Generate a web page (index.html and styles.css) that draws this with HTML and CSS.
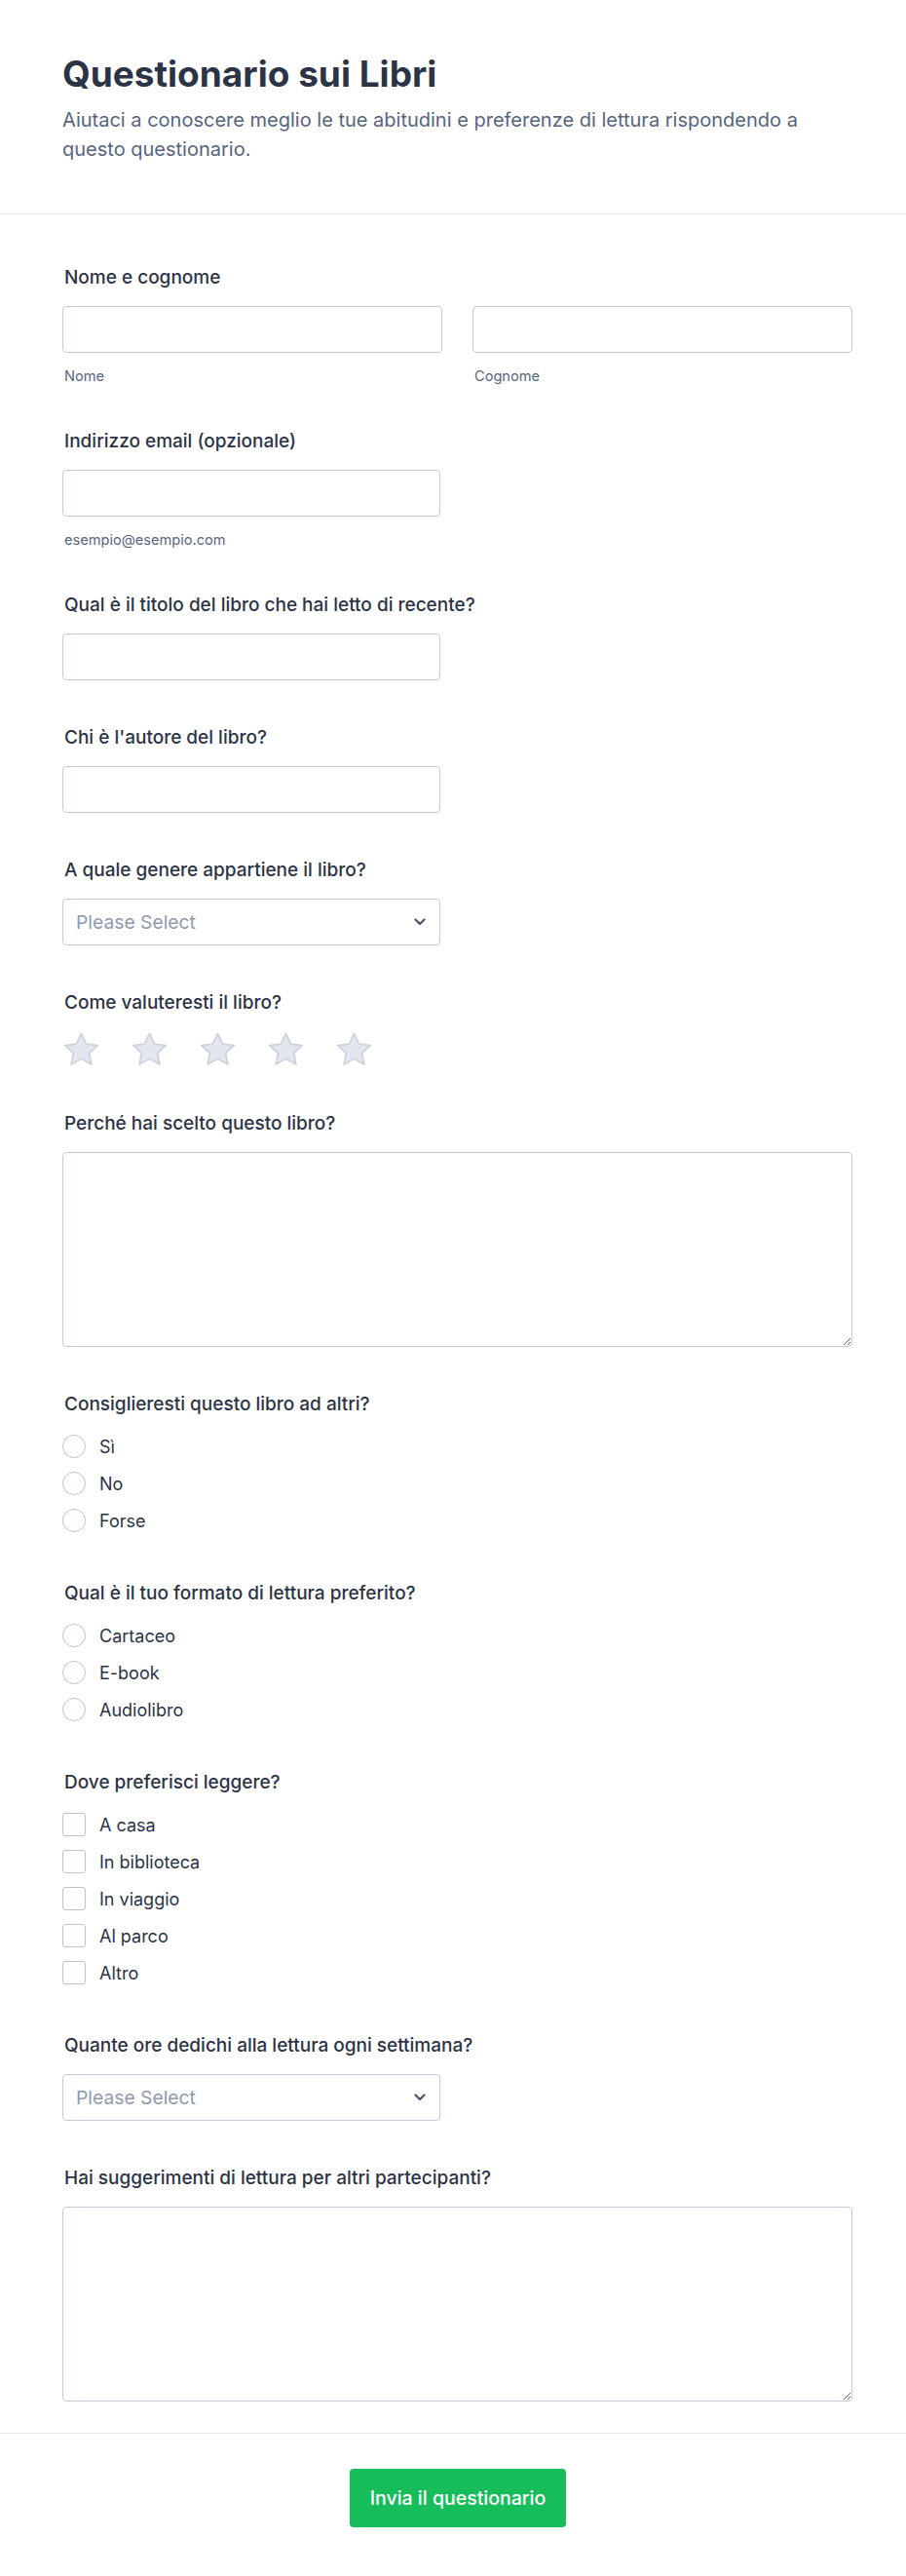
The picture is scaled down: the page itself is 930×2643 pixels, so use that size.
FILE: index.html
```html
<!DOCTYPE html>
<html lang="it">
<head>
<meta charset="utf-8">
<title>Questionario sui Libri</title>
<link rel="stylesheet" href="styles.css">
</head>
<body>
<header class="head">
  <h1 class="title">Questionario sui Libri</h1>
  <p class="subtitle">Aiutaci a conoscere meglio le tue abitudini e preferenze di lettura rispondendo a questo questionario.</p>
</header>

<main class="form">
  <div class="field has-sub">
    <label class="label">Nome e cognome</label>
    <div class="pair">
      <div class="pair-col">
        <input class="input" type="text">
        <span class="sub">Nome</span>
      </div>
      <div class="pair-col">
        <input class="input" type="text">
        <span class="sub">Cognome</span>
      </div>
    </div>
  </div>

  <div class="field has-sub">
    <label class="label">Indirizzo email (opzionale)</label>
    <input class="input half" type="email">
    <span class="sub">esempio@esempio.com</span>
  </div>

  <div class="field">
    <label class="label">Qual è il titolo del libro che hai letto di recente?</label>
    <input class="input half" type="text">
  </div>

  <div class="field">
    <label class="label">Chi è l'autore del libro?</label>
    <input class="input half" type="text">
  </div>

  <div class="field">
    <label class="label">A quale genere appartiene il libro?</label>
    <div class="select half">
      <span class="placeholder">Please Select</span>
      <svg class="chev" width="12" height="8" viewBox="0 0 12 8"><polyline points="1.5,1.5 6,6 10.5,1.5" fill="none" stroke="#4b5671" stroke-width="2.2" stroke-linecap="round" stroke-linejoin="round"/></svg>
    </div>
  </div>

  <div class="field">
    <label class="label">Come valuteresti il libro?</label>
    <div class="stars">
      <svg class="star" viewBox="0 0 40 38"><path d="M20 2.5 L25.2 13.6 L37.2 14.9 L28.3 23.1 L30.7 35 L20 29 L9.3 35 L11.7 23.1 L2.8 14.9 L14.8 13.6 Z" fill="#e3e6ef" stroke="#cdd2dd" stroke-width="1.8" stroke-linejoin="round"/></svg>
      <svg class="star" viewBox="0 0 40 38"><path d="M20 2.5 L25.2 13.6 L37.2 14.9 L28.3 23.1 L30.7 35 L20 29 L9.3 35 L11.7 23.1 L2.8 14.9 L14.8 13.6 Z" fill="#e3e6ef" stroke="#cdd2dd" stroke-width="1.8" stroke-linejoin="round"/></svg>
      <svg class="star" viewBox="0 0 40 38"><path d="M20 2.5 L25.2 13.6 L37.2 14.9 L28.3 23.1 L30.7 35 L20 29 L9.3 35 L11.7 23.1 L2.8 14.9 L14.8 13.6 Z" fill="#e3e6ef" stroke="#cdd2dd" stroke-width="1.8" stroke-linejoin="round"/></svg>
      <svg class="star" viewBox="0 0 40 38"><path d="M20 2.5 L25.2 13.6 L37.2 14.9 L28.3 23.1 L30.7 35 L20 29 L9.3 35 L11.7 23.1 L2.8 14.9 L14.8 13.6 Z" fill="#e3e6ef" stroke="#cdd2dd" stroke-width="1.8" stroke-linejoin="round"/></svg>
      <svg class="star" viewBox="0 0 40 38"><path d="M20 2.5 L25.2 13.6 L37.2 14.9 L28.3 23.1 L30.7 35 L20 29 L9.3 35 L11.7 23.1 L2.8 14.9 L14.8 13.6 Z" fill="#e3e6ef" stroke="#cdd2dd" stroke-width="1.8" stroke-linejoin="round"/></svg>
    </div>
  </div>

  <div class="field">
    <label class="label">Perché hai scelto questo libro?</label>
    <textarea class="textarea"></textarea>
  </div>

  <div class="field field-opts">
    <label class="label">Consiglieresti questo libro ad altri?</label>
    <div class="opts">
      <div class="opt"><span class="radio"></span><span class="opt-text">Sì</span></div>
      <div class="opt"><span class="radio"></span><span class="opt-text">No</span></div>
      <div class="opt"><span class="radio"></span><span class="opt-text">Forse</span></div>
    </div>
  </div>

  <div class="field field-opts">
    <label class="label">Qual è il tuo formato di lettura preferito?</label>
    <div class="opts">
      <div class="opt"><span class="radio"></span><span class="opt-text">Cartaceo</span></div>
      <div class="opt"><span class="radio"></span><span class="opt-text">E-book</span></div>
      <div class="opt"><span class="radio"></span><span class="opt-text">Audiolibro</span></div>
    </div>
  </div>

  <div class="field field-opts">
    <label class="label">Dove preferisci leggere?</label>
    <div class="opts">
      <div class="opt"><span class="check"></span><span class="opt-text">A casa</span></div>
      <div class="opt"><span class="check"></span><span class="opt-text">In biblioteca</span></div>
      <div class="opt"><span class="check"></span><span class="opt-text">In viaggio</span></div>
      <div class="opt"><span class="check"></span><span class="opt-text">Al parco</span></div>
      <div class="opt"><span class="check"></span><span class="opt-text">Altro</span></div>
    </div>
  </div>

  <div class="field">
    <label class="label">Quante ore dedichi alla lettura ogni settimana?</label>
    <div class="select half">
      <span class="placeholder">Please Select</span>
      <svg class="chev" width="12" height="8" viewBox="0 0 12 8"><polyline points="1.5,1.5 6,6 10.5,1.5" fill="none" stroke="#4b5671" stroke-width="2.2" stroke-linecap="round" stroke-linejoin="round"/></svg>
    </div>
  </div>

  <div class="field last">
    <label class="label">Hai suggerimenti di lettura per altri partecipanti?</label>
    <textarea class="textarea"></textarea>
  </div>
</main>

<footer class="foot">
  <button class="submit" type="button">Invia il questionario</button>
</footer>
</body>
</html>
```

FILE: styles.css
```css
* { box-sizing: border-box; }

body {
  margin: 0;
  background: #ffffff;
  color: #2c3345;
  font-family: Inter, "Noto Sans", "Liberation Sans", sans-serif;
}

.head {
  padding: 54px 80px 51px 64px;
  border-bottom: 1px solid #e3e5ee;
}

.title {
  margin: 0;
  font-size: 37px;
  line-height: 44px;
  font-weight: 700;
  color: #2c3345;
}

.subtitle {
  margin: 10px 0 0;
  font-size: 20px;
  line-height: 30px;
  color: #57647e;
}

.form {
  padding: 53px 55px 32px 64px;
}

.field {
  display: flex;
  flex-direction: column;
  align-items: flex-start;
  margin-bottom: 47px;
}

.field.has-sub { margin-bottom: 46px; }
.field.field-opts { margin-bottom: 48px; }
.field.last { margin-bottom: 0; }

.label {
  display: block;
  font-size: 19px;
  line-height: 24px;
  font-weight: 500;
  color: #2c3345;
  margin: 0 0 17px 2px;
}

.pair {
  display: flex;
  gap: 31px;
  width: 100%;
}

.pair-col {
  flex: 1;
  display: flex;
  flex-direction: column;
}

.input {
  display: block;
  width: 100%;
  height: 48px;
  border: 1px solid #c3cad8;
  border-radius: 4px;
  background: #fff;
  font: inherit;
}

.half { width: 388px; }

.sub {
  display: block;
  margin: 15px 0 0 2px;
  font-size: 14.6px;
  line-height: 18px;
  color: #57647e;
}

.select {
  height: 48px;
  border: 1px solid #c3cad8;
  border-radius: 4px;
  background: #fff;
  display: flex;
  align-items: center;
  justify-content: space-between;
  padding: 0 14px 0 13px;
}

.placeholder {
  font-size: 19.3px;
  color: #8f99ae;
}

.chev { display: block; }

.stars {
  display: flex;
  gap: 31px;
  height: 36px;
}

.star {
  width: 39px;
  height: 37px;
  display: block;
}

.textarea {
  display: block;
  width: 100%;
  height: 200px;
  border: 1px solid #c3cad8;
  border-radius: 4px;
  background: #fff;
  font: inherit;
  resize: vertical;
}

.opts {
  display: flex;
  flex-direction: column;
  gap: 8px;
  margin-top: -1px;
}

.opt {
  display: flex;
  align-items: center;
  height: 30px;
}

.radio {
  width: 24px;
  height: 24px;
  border: 1.5px solid #bcc3d1;
  border-radius: 50%;
  background: #fff;
  flex: none;
}

.check {
  width: 24px;
  height: 24px;
  border: 1.5px solid #bcc3d1;
  border-radius: 3px;
  background: #fff;
  flex: none;
}

.opt-text {
  margin-left: 14px;
  font-size: 18px;
  color: #2c3345;
}

.foot {
  border-top: 1px solid #e3e5ee;
  padding: 36px 0 50px;
  display: flex;
  justify-content: center;
}

.submit {
  height: 60px;
  width: 222px;
  border: none;
  border-radius: 4px;
  background: #18bd5b;
  color: #fff;
  font-family: inherit;
  font-size: 19.5px;
  font-weight: 500;
  margin-left: 10px;
}
```
